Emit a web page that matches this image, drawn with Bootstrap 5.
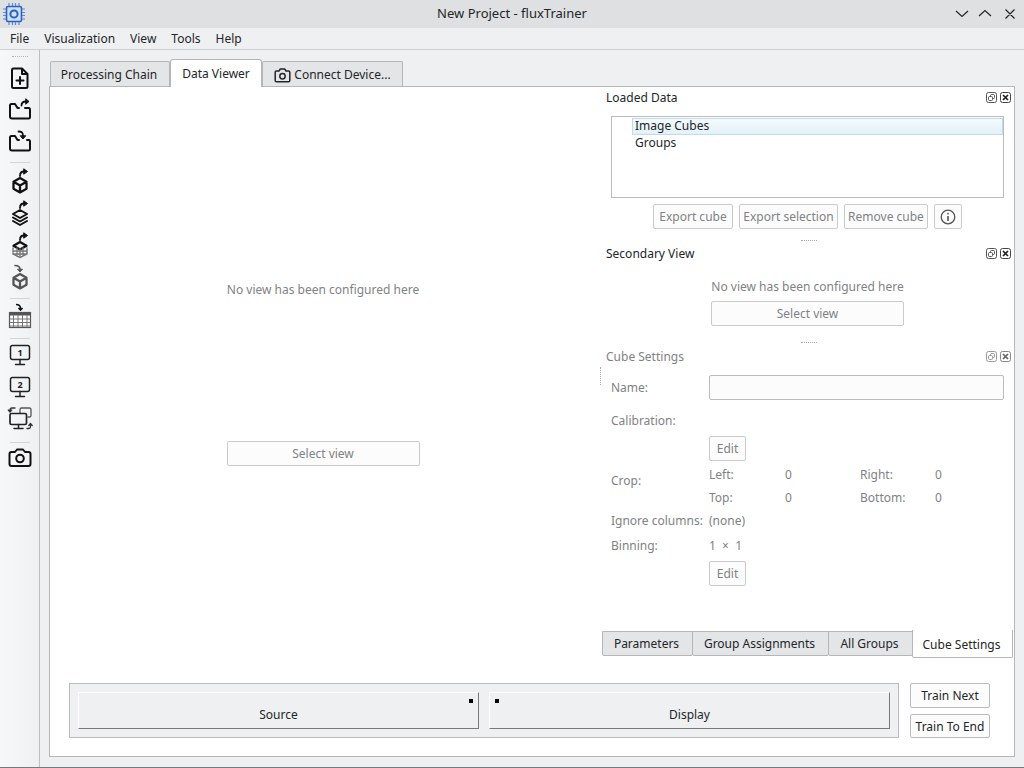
<!DOCTYPE html>
<html lang="en">
<head>
<meta charset="utf-8">
<title>New Project - fluxTrainer</title>
<link href="https://cdn.jsdelivr.net/npm/bootstrap@5.3.0/dist/css/bootstrap.min.css" rel="stylesheet">
<style>
html,body{height:768px;overflow:hidden}
body{width:1024px;background:#eff0f1;font-family:"Noto Sans",sans-serif;font-size:12px;line-height:18px;color:#232629}
.titlebar{height:28px;background:#dee0e2;position:relative}
.titlebar .ttl{font-size:13px;flex:1;text-align:center;padding:0 0 2px 43px}
.wbtns{width:69px;flex:none}
.wicon{width:24px;margin-left:2px;flex:none}
.menubar{height:22px;background:#eff0f1;padding:1px 0 0 3px;border-bottom:1px solid #cfd0d1}
.menubar span{padding:0 7px;margin-right:1px;line-height:20px}
.bodyrow{height:717px}
.toolstrip{width:40px;background:linear-gradient(90deg,#f7f8f9,#eff0f1);border-right:1px solid #bcbebf;flex:none;padding-top:12px;position:relative}
.toolstrip svg{display:block;width:39px;height:32px}
.gripx{border-top:1px dotted #b4b5b6;width:16px;height:1px;margin:0 auto}
.gripy{position:absolute;left:12px;top:6px}
.tsep{height:8px;display:flex;align-items:center;justify-content:center}
.tsep i{display:block;width:20px;border-top:1px solid #d3d4d5}
.work{flex:1;padding:9px 9px 10px 9px;min-width:0}
.apptabs{height:27px;padding-left:1px;align-items:flex-end;flex-wrap:nowrap}
.apptab{height:25px;background:#e4e5e7;border:1px solid #b4b6b7;border-bottom:0;border-radius:2px 2px 0 0;color:#232629;display:flex;align-items:center;gap:3px;margin-bottom:0;white-space:nowrap;justify-content:center;padding:2px 0 0}
.apptab:hover{color:#232629}
.apptab.on{height:28px;background:#fff;margin-bottom:-1px;position:relative;z-index:2;border-radius:3px 3px 0 0}
.apptab.t1{width:120px;padding-right:2px}
.apptab.t2{width:92px;padding:0}
.apptab.t3{width:141px}
.mainpanel{height:671px;background:#fff;border:1px solid #b4b6b7}
.toprow{height:596px}
.leftview{width:550px;flex:none;color:#7f8285;align-items:center;padding-right:4px}
.leftview .nv{margin-top:194px;height:18px;text-align:center;white-space:nowrap}
.flatbtn{background:#fcfcfc;border:1px solid #c3c5c6;border-radius:2px;color:#7f8285;font-size:12px;line-height:18px;padding:0;display:flex;align-items:center;justify-content:center;white-space:nowrap}
.flatbtn:disabled,.flatbtn.disabled{color:#7f8285;background:#fcfcfc;border-color:#c9cbcc;opacity:1}
.sel193{width:193px;height:25px}
.leftview .sel193{margin-top:142px}
.rightcol{width:414px;flex:none;position:relative}
.vgrip{position:absolute;left:0;top:280px;height:18px;border-left:1px dotted #aaa}
.docktitle{height:21px;padding:0 3px 0 6px;color:#232629;align-items:center}
.docktitle.off{color:#7f8285;padding-top:2px}
.tree{margin:8px 10px 0 11px;height:82px;border:1px solid #b9bbbc;padding:1px 0 0 20px}
.tree .it{height:17px;line-height:15px;padding-left:3px}
.tree .it.cur{border:1px solid #bfdcea;background:linear-gradient(#f4fafd,#e3f1f8);padding-left:2px;line-height:13px}
.dockbtns{margin-top:6px;height:25px;padding-left:53px;gap:6px}
.flatbtn.w1{width:80px;height:25px}.flatbtn.w2{width:99px;height:25px}.flatbtn.w3{width:84px;height:25px}.flatbtn.w4{width:28px;height:25px}
.hgrip{height:1px;width:16px;margin:11px auto 2px;border-top:1px dotted #aaa;position:relative;left:2px}
.sec{margin-top:14px;height:18px;margin-left:111px;width:193px;color:#7f8285;text-align:center;white-space:nowrap}
.sec2{margin-left:111px;margin-top:5px}
.hgrip.g2{margin:16px auto 2px}
.cubeform{display:grid;grid-template-columns:98px 76px 75px 75px 70px;padding-left:11px;color:#7f8285}
.nameinp{grid-column:2/6;width:295px;height:25px;background:#fcfcfc;border:1px solid #b9bbbc;border-radius:2px}
.formrow{display:flex;align-items:center;white-space:nowrap}
.croplbl{padding-bottom:11px}
.editb{width:37px;height:25px}
.spacer{flex:1}
.btabs{height:28px;padding-left:2px;align-items:flex-start;margin-bottom:24px;flex-wrap:nowrap}
.btab{height:25px;background:#e4e5e7;border:1px solid #b4b6b7;border-radius:0 0 2px 2px;margin-right:-1px;padding-right:2px;text-align:center;line-height:23px;color:#232629}
.btab.on{height:28px;background:#fff;line-height:29px;margin-top:-1px;border-top:0;position:relative;z-index:1}
.botrow{padding:0 0 0 19px;height:56px;gap:11px}
.sourcebox{width:830px;height:55px;background:#eff0f1;border:1px solid #b9bbbc;padding:8px;gap:10px}
.srcitem{width:401px;height:37px;background:#eff0f1;border:1px solid;border-color:#fff #77797b #77797b #fff;position:relative;text-align:center;padding-top:13px;line-height:18px;color:#232629}
.pin{position:absolute;top:6px;width:4px;height:4px;background:#000}
.d1 .pin{right:5px}.d2 .pin{left:5px}
.trainbtns{gap:6px;width:80px}
.tbtn{width:80px;height:25px;background:#fcfcfc;border:1px solid #b9bbbc;border-radius:2px;color:#232629;padding:0;font-size:12px;line-height:18px}
.tbtn.tb2{height:24px;padding-top:1px}
.tbtn:hover{background:#fcfcfc;color:#232629;border-color:#b9bbbc}
.dockicons{gap:3px}
.bottomline{height:1px;background:#77797b}
</style>
</head>
<body class="d-flex flex-column">
<div class="titlebar d-flex align-items-center">
  <div class="wicon d-flex">
    <svg width="24" height="24" viewBox="0 0 24 24" fill="none"><rect x="4.500" y="4.500" width="15" height="15" rx="1.500" fill="#cfe0f5" stroke="#2a62c4" stroke-width="1.600"/><circle cx="12" cy="12" r="3.600" fill="none" stroke="#2a62c4" stroke-width="2"/><path d="M7 1v3M10.500 1v3M13.500 1v3M17 1v3M7 20v3M10.500 20v3M13.500 20v3M17 20v3M1 7h3M1 10.500h3M1 13.500h3M1 17h3M20 7h3M20 10.500h3M20 13.500h3M20 17h3" stroke="#5b8ad8" stroke-width="1.200"/></svg>
  </div>
  <div class="ttl">New Project - fluxTrainer</div>
  <div class="wbtns d-flex">
    <svg width="69" height="24" viewBox="0 0 69 24" fill="none" stroke="#232629" stroke-width="1.200"><path d="M1 9l6 5.500 6-5.500M24 14l6-5.500 6 5.500M50.500 7.500l9 9M59.500 7.500l-9 9"/></svg>
  </div>
</div>
<div class="menubar d-flex align-items-center"><span>File</span><span>Visualization</span><span>View</span><span>Tools</span><span>Help</span></div>
<div class="bodyrow d-flex">
  <div class="toolstrip">
    <div class="gripx gripy"></div>
    <svg viewBox="0 0 39 32" fill="none" stroke="#111" stroke-width="2" stroke-linejoin="round" stroke-linecap="round"><path d="M13.500 6.500h8.500l5.500 5.500v12.500a1.500 1.500 0 0 1-1.500 1.500h-12.500a1.500 1.500 0 0 1-1.500-1.500v-16.500a1.500 1.500 0 0 1 1.500-1.500zM22 6.500v5.500h5.500M20 15v7M16.500 18.500h7"/></svg>
    <svg viewBox="0 0 39 32" fill="none" stroke="#111" stroke-width="2" stroke-linejoin="round" stroke-linecap="round"><path d="M25 14h4a1.500 1.500 0 0 1 1 1.500v7.500a1.500 1.500 0 0 1-1.500 1.500h-16.500a2 2 0 0 1-2-2v-11a1.500 1.500 0 0 1 1.500-1.500h3.500l2.500 4h1.500"/><path d="M21.500 11.500c0-2.500 1.500-4 4.500-4" stroke-width="1.800"/><path d="M26 5l3 2.500-3 2.500z" fill="#111" stroke-width="1"/></svg>
    <svg viewBox="0 0 39 32" fill="none" stroke="#111" stroke-width="2" stroke-linejoin="round" stroke-linecap="round"><path d="M27 14h2a1.500 1.500 0 0 1 1 1.500v7.500a1.500 1.500 0 0 1-1.500 1.500h-16.500a2 2 0 0 1-2-2v-11a1.500 1.500 0 0 1 1.500-1.500h3.500l2.500 4h1.500"/><path d="M18.500 5.500c4 0 4.500 1.500 4.500 4.500" stroke-width="1.800"/><path d="M20.500 10l2.500 3 2.500-3z" fill="#111" stroke-width="1"/></svg>
    <div class="tsep"><i></i></div>
    <svg viewBox="0 0 39 32" fill="none" stroke="#111" stroke-width="2.300" stroke-linejoin="round" stroke-linecap="round"><path d="M20 12l6.500 3.700v7l-6.500 3.700-6.500-3.700v-7zM13.500 15.700l6.500 3.700 6.500-3.700M20 19.400v7"/><path d="M20 10c0-2.500 1.500-4.500 4-4.500" stroke-width="1.800"/><path d="M24 3l3.500 2.500-3.500 2.500z" fill="#111" stroke-width="1"/></svg>
    <svg viewBox="0 0 39 32" fill="none" stroke="#111" stroke-width="2" stroke-linejoin="round" stroke-linecap="round"><path d="M20 12l7 4-7 4-7-4zM13 19.500l7 4 7-4M13 23l7 4 7-4"/><path d="M20 10c0-2.500 1.500-4.500 4-4.500" stroke-width="1.800"/><path d="M24 3l3.500 2.500-3.500 2.500z" fill="#111" stroke-width="1"/></svg>
    <svg viewBox="0 0 39 32" fill="none" stroke="#111" stroke-width="2.300" stroke-linejoin="round" stroke-linecap="round"><path d="M13.500 15.700l6.500-3.700 6.500 3.700-6.500 3.700z"/><path d="M13 18v6l7 3.500 7-3.500v-6M13 21h14M13 24h14M17 18v8M20 19v8M23 18v8" stroke="#777" stroke-width="1.500" stroke-dasharray="1.500 1"/><path d="M20 10c0-2.500 1.500-4.500 4-4.500" stroke-width="1.800"/><path d="M24 3l3.500 2.500-3.500 2.500z" fill="#111" stroke-width="1"/></svg>
    <svg viewBox="0 0 39 32" fill="none" stroke="#555" stroke-width="2.300" stroke-linejoin="round" stroke-linecap="round"><path d="M20 12l6.500 3.700v7l-6.500 3.700-6.500-3.700v-7zM13.500 15.700l6.500 3.700 6.500-3.700M20 19.400v7"/><path d="M15 3.500c3 0 5 .5 5 4" stroke-width="1.600"/><path d="M17.800 7.500l2.200 2.500 2.200-2.500z" fill="#555" stroke-width="1"/></svg>
    <div class="tsep"><i></i></div>
    <svg viewBox="0 0 39 32" fill="none" stroke="#777" stroke-width="1"><path d="M16 2.500c3 0 4.500 1 4.500 4" stroke="#111" stroke-width="1.600"/><path d="M18.300 6.300l2.200 2.500 2.200-2.500z" fill="#111" stroke="#111"/><rect x="9.500" y="10.500" width="21" height="15" fill="#fff" stroke="#555" stroke-width="1.200"/><path d="M9.500 12h21" stroke="#555" stroke-width="3"/><path d="M9.500 17h21M9.500 20.500h21M9.500 24h21M13.500 13v12M18 13v12M22.500 13v12M27 13v12"/></svg>
    <div class="tsep"><i></i></div>
    <svg viewBox="0 0 39 32" fill="none" stroke="#222" stroke-width="1.500" stroke-linejoin="round" stroke-linecap="round"><rect x="10.500" y="3.500" width="19" height="14" rx="2"/><path d="M20 17.500v4M15.500 22.500h9"/><text x="20" y="14" text-anchor="middle" font-family="Noto Sans" font-weight="700" font-size="9" fill="#222" stroke="none">1</text></svg>
    <svg viewBox="0 0 39 32" fill="none" stroke="#222" stroke-width="1.500" stroke-linejoin="round" stroke-linecap="round"><rect x="10.500" y="3.500" width="19" height="14" rx="2"/><path d="M20 17.500v4M15.500 22.500h9"/><text x="20" y="14" text-anchor="middle" font-family="Noto Sans" font-weight="700" font-size="9" fill="#222" stroke="none">2</text></svg>
    <svg viewBox="0 0 39 32" fill="none" stroke="#333" stroke-width="1.500" stroke-linejoin="round" stroke-linecap="round"><path d="M20 7V3.500a1.500 1.500 0 0 1 1.500-1.500h8a1.500 1.500 0 0 1 1.500 1.500v6a1.500 1.500 0 0 1-1.500 1.500H28" stroke="#555" stroke-width="1.300"/><rect x="10" y="7.500" width="16.500" height="11" rx="1.500" stroke="#222" stroke-width="1.700"/><path d="M18.500 18.500v3M14 22.500h9" stroke="#222" stroke-width="1.500"/><path d="M15 2h-3c-1.500 0-2 1-2 2v1.500M8.300 4l1.700 2 1.700-2M27 22.500h2c1 0 1.500-.5 1.500-2v-2M28.800 19.500l1.700-2 1.700 2" stroke-width="1.300"/></svg>
    <div class="tsep"><i></i></div>
    <svg viewBox="0 0 39 32" fill="none" stroke="#111" stroke-width="2" stroke-linejoin="round" stroke-linecap="round"><path d="M11.500 6h3.500l2-2.500h6l2 2.500h3.500a2 2 0 0 1 2 2v10a2 2 0 0 1-2 2h-17a2 2 0 0 1-2-2v-10a2 2 0 0 1 2-2z"/><circle cx="20" cy="12.500" r="3.800"/></svg>
  </div>
  <div class="work d-flex flex-column">
    <ul class="nav apptabs">
      <li class="nav-item"><a class="nav-link apptab t1" href="#">Processing Chain</a></li>
      <li class="nav-item"><a class="nav-link apptab on t2" href="#">Data Viewer</a></li>
      <li class="nav-item"><a class="nav-link apptab t3" href="#"><svg width="17" height="15" viewBox="0 0 17 15" fill="none" stroke="#232629" stroke-width="1.500" stroke-linejoin="round"><path d="M2.500 3h2.500l1.300-2h4.400l1.300 2h2.500a1.300 1.300 0 0 1 1.300 1.300v8.200a1.300 1.300 0 0 1-1.300 1.300h-12a1.300 1.300 0 0 1-1.300-1.300v-8.200a1.300 1.300 0 0 1 1.300-1.300z"/><circle cx="8.500" cy="8.200" r="2.700"/></svg>Connect Device...</a></li>
    </ul>
    <div class="mainpanel d-flex flex-column">
      <div class="toprow d-flex">
        <div class="leftview d-flex flex-column">
          <div class="nv">No view has been configured here</div>
          <button class="btn flatbtn sel193" disabled>Select view</button>
        </div>
        <div class="rightcol d-flex flex-column">
          <div class="vgrip"></div>
          <div class="docktitle d-flex justify-content-between">
            <span>Loaded Data</span>
            <span class="dockicons d-flex">
              <svg width="11" height="11" viewBox="0 0 11 11" fill="none" stroke="#555"><rect x=".5" y=".5" width="10" height="10" rx="2"/><rect x="4.500" y="2.500" width="4" height="4" rx="1"/><rect x="2.500" y="4.500" width="4" height="4" rx="1" fill="#fff"/></svg>
              <svg width="11" height="11" viewBox="0 0 11 11" fill="none" stroke="#444"><rect x=".5" y=".5" width="10" height="10" rx="2"/><path d="M3 3l5 5M8 3l-5 5" stroke="#222" stroke-width="1.700"/></svg>
            </span>
          </div>
          <div class="tree">
            <div class="it cur">Image Cubes</div>
            <div class="it">Groups</div>
          </div>
          <div class="dockbtns d-flex">
            <button class="btn flatbtn w1" disabled>Export cube</button>
            <button class="btn flatbtn w2" disabled>Export selection</button>
            <button class="btn flatbtn w3" disabled>Remove cube</button>
            <button class="btn flatbtn w4" disabled><svg width="16" height="16" viewBox="0 0 16 16" fill="none" stroke="#555" stroke-width="1.300"><circle cx="8" cy="8" r="6.800"/><path d="M8 7v5" stroke-width="1.600"/><circle cx="8" cy="4.600" r=".9" fill="#555" stroke="none"/></svg></button>
          </div>
          <div class="hgrip"></div>
          <div class="docktitle d-flex justify-content-between">
            <span>Secondary View</span>
            <span class="dockicons d-flex">
              <svg width="11" height="11" viewBox="0 0 11 11" fill="none" stroke="#555"><rect x=".5" y=".5" width="10" height="10" rx="2"/><rect x="4.500" y="2.500" width="4" height="4" rx="1"/><rect x="2.500" y="4.500" width="4" height="4" rx="1" fill="#fff"/></svg>
              <svg width="11" height="11" viewBox="0 0 11 11" fill="none" stroke="#444"><rect x=".5" y=".5" width="10" height="10" rx="2"/><path d="M3 3l5 5M8 3l-5 5" stroke="#222" stroke-width="1.700"/></svg>
            </span>
          </div>
          <div class="sec">No view has been configured here</div>
          <button class="btn flatbtn sel193 sec2" disabled>Select view</button>
          <div class="hgrip g2"></div>
          <div class="docktitle off d-flex justify-content-between">
            <span>Cube Settings</span>
            <span class="dockicons d-flex">
              <svg width="11" height="11" viewBox="0 0 11 11" fill="none" stroke="#999"><rect x=".5" y=".5" width="10" height="10" rx="2"/><rect x="4.500" y="2.500" width="4" height="4" rx="1"/><rect x="2.500" y="4.500" width="4" height="4" rx="1" fill="#fff"/></svg>
              <svg width="11" height="11" viewBox="0 0 11 11" fill="none" stroke="#888"><rect x=".5" y=".5" width="10" height="10" rx="2"/><path d="M3 3l5 5M8 3l-5 5" stroke="#666" stroke-width="1.700"/></svg>
            </span>
          </div>
          <div class="cubeform" style="grid-template-rows:9px 25px 8px 25px 3px 25px 2px 23px 23px 23px 1px 25px 3px 25px">
            <div class="formrow" style="grid-row:2">Name:</div>
            <div class="nameinp" style="grid-row:2"></div>
            <div class="formrow" style="grid-row:4">Calibration:</div>
            <button class="btn flatbtn editb" style="grid-row:6;grid-column:2" disabled>Edit</button>
            <div class="formrow croplbl" style="grid-row:8/10">Crop:</div>
            <div class="formrow" style="grid-row:8;grid-column:2">Left:</div>
            <div class="formrow" style="grid-row:8;grid-column:3">0</div>
            <div class="formrow" style="grid-row:8;grid-column:4">Right:</div>
            <div class="formrow" style="grid-row:8;grid-column:5">0</div>
            <div class="formrow" style="grid-row:9;grid-column:2">Top:</div>
            <div class="formrow" style="grid-row:9;grid-column:3">0</div>
            <div class="formrow" style="grid-row:9;grid-column:4">Bottom:</div>
            <div class="formrow" style="grid-row:9;grid-column:5">0</div>
            <div class="formrow" style="grid-row:10">Ignore columns:</div>
            <div class="formrow" style="grid-row:10;grid-column:2">(none)</div>
            <div class="formrow" style="grid-row:12">Binning:</div>
            <div class="formrow" style="grid-row:12;grid-column:2">1 &nbsp;×&nbsp; 1</div>
            <button class="btn flatbtn editb" style="grid-row:14;grid-column:2" disabled>Edit</button>
          </div>
          <div class="spacer"></div>
          <ul class="nav btabs">
            <li><div class="btab" style="width:91px">Parameters</div></li>
            <li><div class="btab" style="width:137px">Group Assignments</div></li>
            <li><div class="btab" style="width:85px">All Groups</div></li>
            <li><div class="btab on" style="width:101px">Cube Settings</div></li>
          </ul>
        </div>
      </div>
      <div class="botrow d-flex">
        <div class="sourcebox d-flex">
          <div class="srcitem d1">Source<span class="pin"></span></div>
          <div class="srcitem d2">Display<span class="pin"></span></div>
        </div>
        <div class="trainbtns d-flex flex-column">
          <button class="btn tbtn">Train Next</button>
          <button class="btn tbtn tb2">Train To End</button>
        </div>
      </div>
    </div>
  </div>
</div>
<div class="bottomline"></div>
</body>
</html>
